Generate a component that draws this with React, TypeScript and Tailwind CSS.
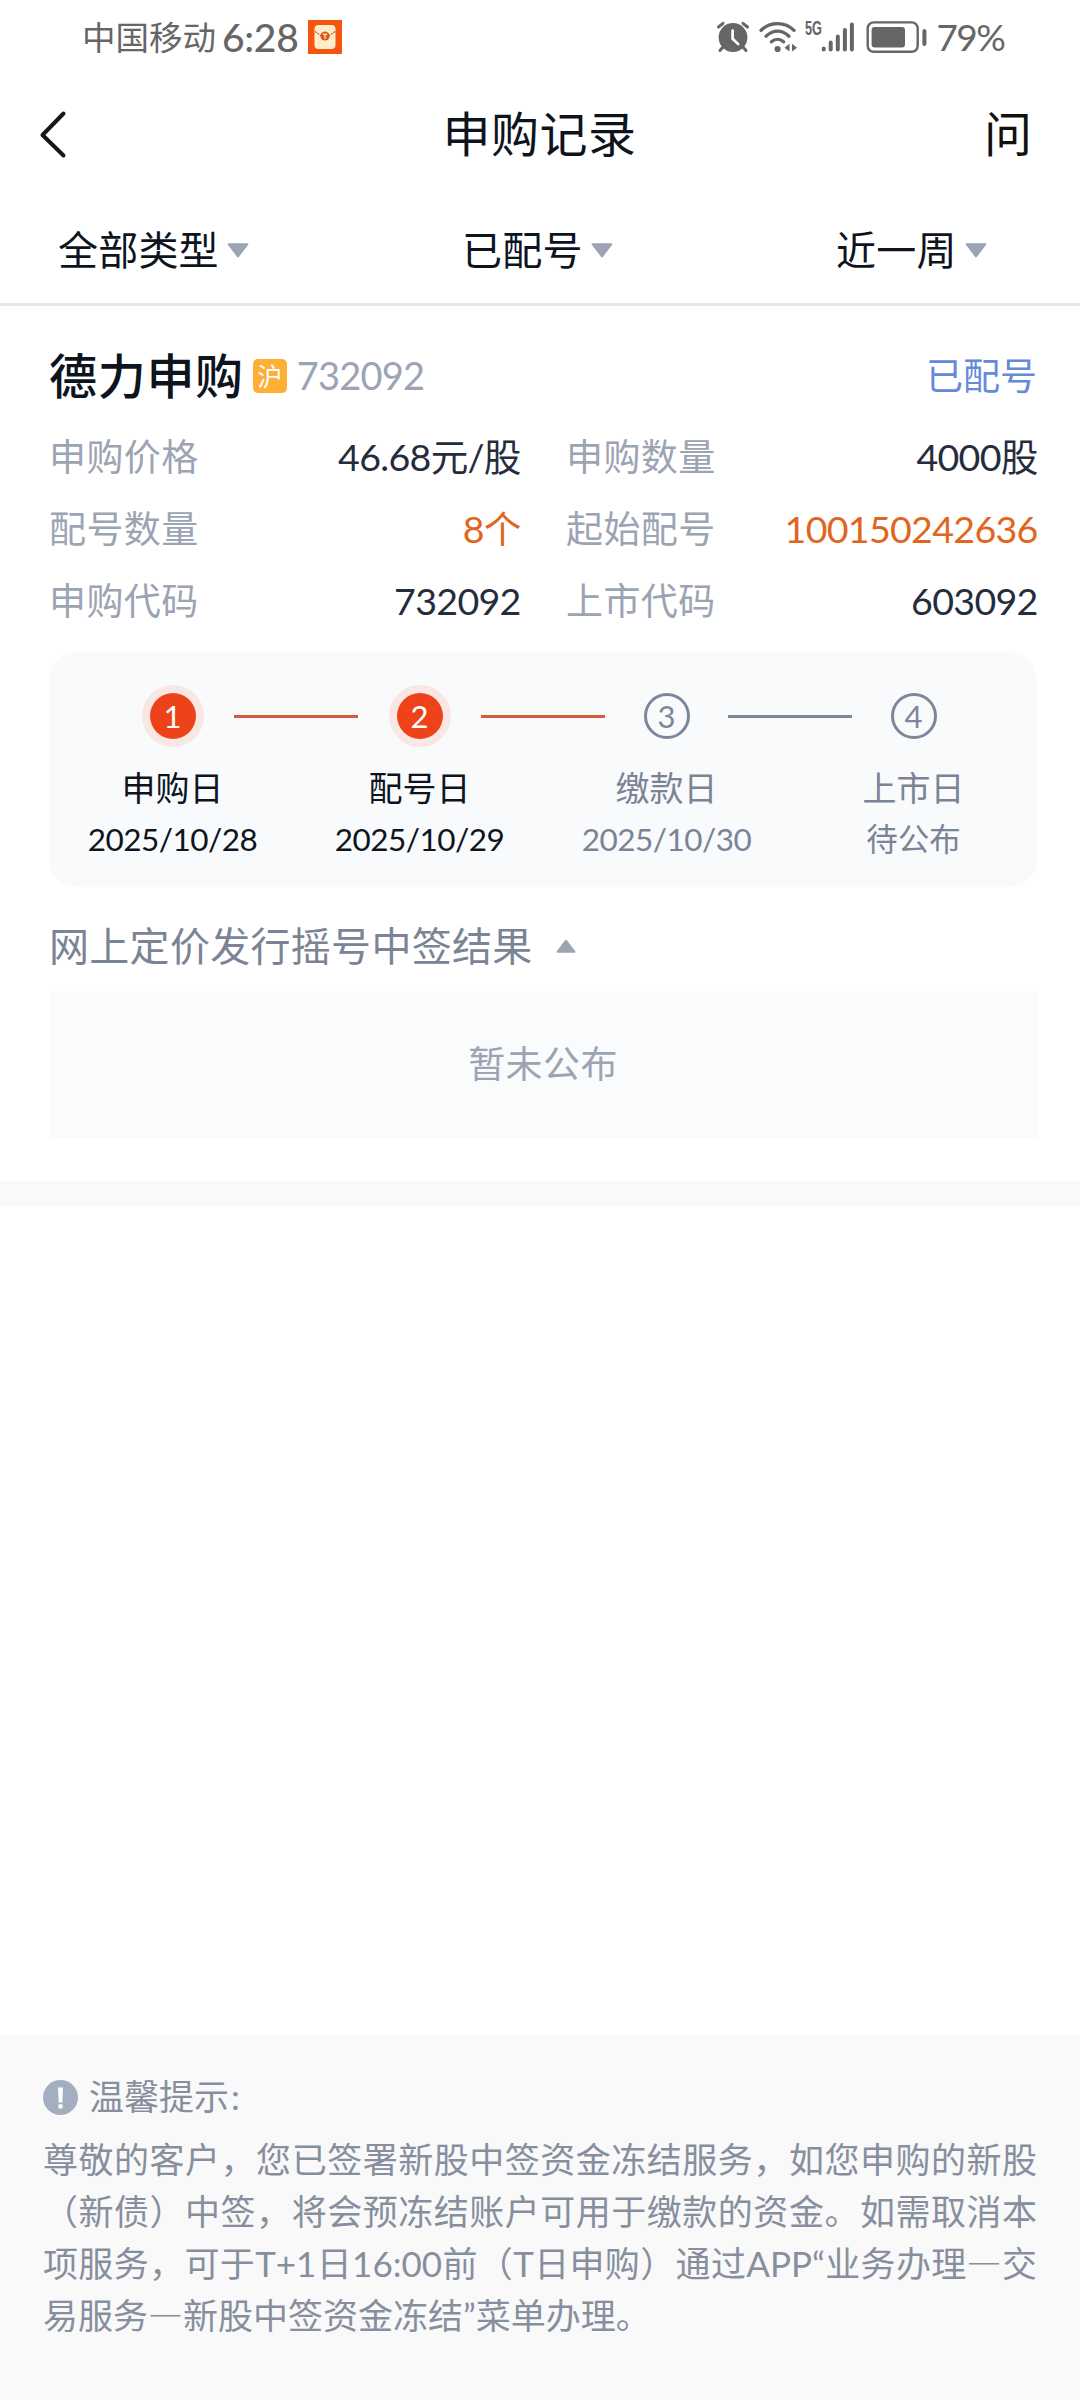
import { Fragment } from "react";
import clsx from "clsx";

interface Field {
  label: string;
  value: string;
  highlight?: boolean;
}

interface Step {
  name: string;
  date: string;
  done: boolean;
}

const filters = [
  { label: "全部类型", className: "w-[404px]" },
  { label: "已配号", className: "w-[374px]" },
  { label: "近一周", className: "" },
];

const fields: Field[] = [
  { label: "申购价格", value: "46.68元/股" },
  { label: "申购数量", value: "4000股" },
  { label: "配号数量", value: "8个", highlight: true },
  { label: "起始配号", value: "100150242636", highlight: true },
  { label: "申购代码", value: "732092" },
  { label: "上市代码", value: "603092" },
];

const steps: Step[] = [
  { name: "申购日", date: "2025/10/28", done: true },
  { name: "配号日", date: "2025/10/29", done: true },
  { name: "缴款日", date: "2025/10/30", done: false },
  { name: "上市日", date: "待公布", done: false },
];

const noticeLines = [
  "尊敬的客户，您已签署新股中签资金冻结服务，如您申购的新股",
  "（新债）中签，将会预冻结账户可用于缴款的资金。如需取消本",
  "项服务，可于T+1日16:00前（T日申购）通过APP“业务办理—交",
  "易服务—新股中签资金冻结”菜单办理。",
];

function RedPacketIcon() {
  return (
    <svg className="ml-[9px] h-[34px] w-[34px]" viewBox="0 0 34 34">
      <rect width="34" height="34" fill="#f4560f" />
      <rect x="6.5" y="5" width="21" height="24" rx="4" fill="#ffeccb" />
      <path d="M7 11.5 13.5 16M27 11.5 20.5 16" stroke="#c85a1c" strokeWidth="1.2" strokeDasharray="2 1" />
      <circle cx="17" cy="16" r="4.6" fill="#e0581c" />
      <path d="M14.8 14.4h4.4M17 14.4v4.4" stroke="#ffeccb" strokeWidth="1.3" />
    </svg>
  );
}

function AlarmIcon() {
  return (
    <svg className="h-[32px] w-[34px]" viewBox="0 0 34 32" fill="none" strokeLinecap="round">
      <path d="M2.5 6 7 2.3M31.5 6 27 2.3" stroke="#666" strokeWidth="3" />
      <path d="M7 26 4 29.5M27 26l3 3.5" stroke="#666" strokeWidth="3" />
      <circle cx="17" cy="16.5" r="14.4" fill="#666" />
      <path d="M16.6 9.5v8.2l5.6 5.4" stroke="#fff" strokeWidth="2.7" strokeLinejoin="round" />
    </svg>
  );
}

function WifiIcon() {
  return (
    <svg className="h-[32px] w-[38px]" viewBox="0 0 38 32" fill="none" stroke="#666" strokeWidth="3.3" strokeLinecap="round">
      <path d="M2 9.4C11 .3 26 .3 35 9.4" />
      <path d="M7 15.2C14 8.4 23 8.4 30 15.2" />
      <path d="M12.4 20.8c3.6-3.2 8.6-3.2 12.2 0" />
      <circle cx="18.6" cy="28" r="3.1" fill="#666" stroke="none" />
      <path d="M30.5 22.8v7.8L25.5 26.7zM33 22.8v7.8l5-3.9z" fill="#666" stroke="none" />
    </svg>
  );
}

function SignalIcon() {
  return (
    <svg className="h-[32px] w-[34px]" viewBox="0 0 34 32" stroke="#666" strokeWidth="4" strokeLinecap="round">
      <path d="M2.7 27.6v1M9.7 21.5v7.1M16.8 15.5v13.1M23.9 9v19.6M30.9 3.5v25.1" />
    </svg>
  );
}

function BatteryIcon() {
  return (
    <svg className="h-[32px] w-[62px]" viewBox="0 0 62 32" fill="none">
      <rect x="1.7" y="1.4" width="50" height="29.4" rx="6" stroke="#666" strokeWidth="2.4" />
      <rect x="5.6" y="6" width="33.4" height="20.4" rx="3" fill="#666" />
      <rect x="56.4" y="8" width="4" height="17" rx="2" fill="#666" />
    </svg>
  );
}

function Caret({ up = false, className }: { up?: boolean; className?: string }) {
  return (
    <svg className={clsx(up && "rotate-180", className)} viewBox="0 0 22 15">
      <path d="M1.6 1.2h18.8L11 13.4z" fill="#9ba3b5" stroke="#9ba3b5" strokeWidth="2" strokeLinejoin="round" />
    </svg>
  );
}

function StatusBar() {
  return (
    <div className="flex h-[74px] items-center pl-[82px] text-[#666]">
      <span className="text-[33.5px]">中国移动</span>
      <span className="ml-[6px] text-[39px] font-medium tracking-[-0.3px]">6:28</span>
      <RedPacketIcon />
      <div className="ml-[374px] flex items-center">
        <AlarmIcon />
        <div className="ml-[9px] flex">
          <WifiIcon />
        </div>
        <span className="ml-[8px] w-[16px] origin-left -translate-y-[9px] scale-x-[0.64] font-['Liberation_Sans'] text-[20px] leading-none font-bold">
          5G
        </span>
        <SignalIcon />
        <div className="ml-[11px] flex">
          <BatteryIcon />
        </div>
        <span className="ml-[9px] text-[37px] tracking-[-1.6px]">79%</span>
      </div>
    </div>
  );
}

function StepTimeline() {
  return (
    <div className="mt-[15px] h-[235px] rounded-[28px] bg-[#f9fafc] pt-[33px]">
      <div className="flex items-center justify-center gap-[30.5px]">
        {steps.map((step, i) => (
          <Fragment key={step.name}>
            {i > 0 && (
              <div className={clsx("h-[3px] w-[124px]", steps[i - 1].done ? "bg-[#d95a38]" : "bg-[#7d869a]")} />
            )}
            <div
              className={clsx(
                "flex h-[62px] w-[62px] items-center justify-center rounded-full",
                step.done && "bg-[#f9e7e4]"
              )}
            >
              <div
                className={clsx(
                  "flex h-[46px] w-[46px] items-center justify-center rounded-full text-[31px] leading-none",
                  step.done ? "bg-[#ee421a] text-white" : "border-[3px] border-[#7d869a] text-[#7d869a]"
                )}
              >
                {i + 1}
              </div>
            </div>
          </Fragment>
        ))}
      </div>
      <div className="mt-[17px] grid grid-cols-4 text-center">
        {steps.map((step) => (
          <div key={step.name} className={step.done ? "text-[#0d141e]" : "text-[#7b8396]"}>
            <div className="text-[34px] leading-[48px]">{step.name}</div>
            <div
              className={clsx("mt-[3px] text-[31.5px] leading-[48px]", step.date.includes("/") && "tracking-[-0.5px]")}
            >
              {step.date}
            </div>
          </div>
        ))}
      </div>
    </div>
  );
}

function RecordCard() {
  return (
    <div className="pt-[40px] pr-[43px] pb-[43px] pl-[49px]">
      <div className="flex h-[60px] items-center">
        <h2 className="text-[48px] font-medium tracking-[0.7px] text-[#0d141e]">德力申购</h2>
        <span className="ml-[9px] flex h-[34px] w-[34px] items-center justify-center rounded-[5px] bg-[#ffaf35] text-[25px] leading-none text-white">
          沪
        </span>
        <span className="ml-[10px] -translate-y-px text-[38px] tracking-[-0.8px] text-[#9ca4b4]">732092</span>
        <span className="ml-auto text-[37px] text-[#648ad8]">已配号</span>
      </div>

      <div className="mt-[15px] grid grid-cols-2 gap-x-[46px]">
        {fields.map((field) => (
          <div key={field.label} className="flex h-[72px] items-center justify-between">
            <span className="text-[37px] tracking-[0.4px] text-[#9ca4b4]">{field.label}</span>
            <span
              className={clsx(
                "-mr-[0.7px] text-[37.6px] tracking-[-0.7px]",
                field.highlight ? "text-[#e2651e]" : "text-[#252d3d]"
              )}
            >
              {field.value}
            </span>
          </div>
        ))}
      </div>

      <StepTimeline />

      <div className="mt-[29px] flex h-[60px] items-center text-[40px] tracking-[0.3px] text-[#7b8396]">
        网上定价发行摇号中签结果
        <Caret up className="ml-[23px] h-[14px] w-[20px]" />
      </div>
      <div className="mt-[15px] flex h-[147px] items-center justify-center bg-[#fafbfd] pb-[2px] text-[37px] tracking-[0.4px] text-[#9ca4b4]">
        暂未公布
      </div>
    </div>
  );
}

// Lato's em dash is shorter than a full-width character
function NoticeLine({ text }: { text: string }) {
  return text.split("—").map((part, i) => (
    <Fragment key={i}>
      {i > 0 && <span className="font-['Noto_Sans_CJK_SC',sans-serif] leading-none">—</span>}
      {part}
    </Fragment>
  ));
}

function Notice() {
  return (
    <div className="h-[365px] bg-[#f9f9f9] px-[43px] pt-[35px] text-[35px] leading-[52px] text-[#878f9f]">
      <div className="flex items-center">
        <svg className="mt-[2px] h-[35px] w-[35px]" viewBox="0 0 35 35">
          <circle cx="17.5" cy="17.5" r="17.5" fill="#a3aec1" />
          <path d="M15 7.5h5l-.7 15h-3.6z" fill="#fff" />
          <circle cx="17.5" cy="26.4" r="2.3" fill="#fff" />
        </svg>
        <span className="ml-[11px]">
          温馨提示<span className="ml-[2px]">:</span>
        </span>
      </div>
      <div className="mt-[11px] [text-spacing-trim:space-all]">
        {noticeLines.map((line, i) => (
          <p
            key={line}
            className={clsx(
              "h-[52px] whitespace-nowrap",
              i < noticeLines.length - 1 && "text-justify [text-align-last:justify]"
            )}
          >
            <NoticeLine text={line} />
          </p>
        ))}
      </div>
    </div>
  );
}

export default function App() {
  return (
    <div
      lang="zh-CN"
      className="flex h-[2400px] w-[1080px] flex-col overflow-hidden bg-white font-['Lato','Noto_Sans_CJK_SC',sans-serif]"
    >
      <StatusBar />

      <header className="flex h-[120px] items-center justify-between pr-[48px] pl-[39px] text-[#0d141e]">
        <svg className="h-[50px] w-[54px]" viewBox="0 0 54 50" fill="none" stroke="#15171b" strokeWidth="4" strokeLinecap="round" strokeLinejoin="round">
          <path d="M24.5 4.5 3.5 26 24.5 46.5" />
        </svg>
        <h1 className="ml-[2px] text-[48px] tracking-[0.5px]">申购记录</h1>
        <span className="text-[48px] text-[#111]">问</span>
      </header>

      <div className="flex h-[112px] items-center border-b-[3px] border-[#e4e7e9] pt-[3px] pl-[58px] text-[40px] tracking-[0.2px] text-[#0d141e]">
        {filters.map((filter) => (
          <div key={filter.label} className={clsx("flex items-center", filter.className)}>
            {filter.label}
            <Caret className="ml-[8px] h-[15px] w-[22px]" />
          </div>
        ))}
      </div>

      <RecordCard />
      <div className="h-[25px] bg-[#f9f9f9]" />
      <div className="flex-1" />
      <Notice />
    </div>
  );
}
